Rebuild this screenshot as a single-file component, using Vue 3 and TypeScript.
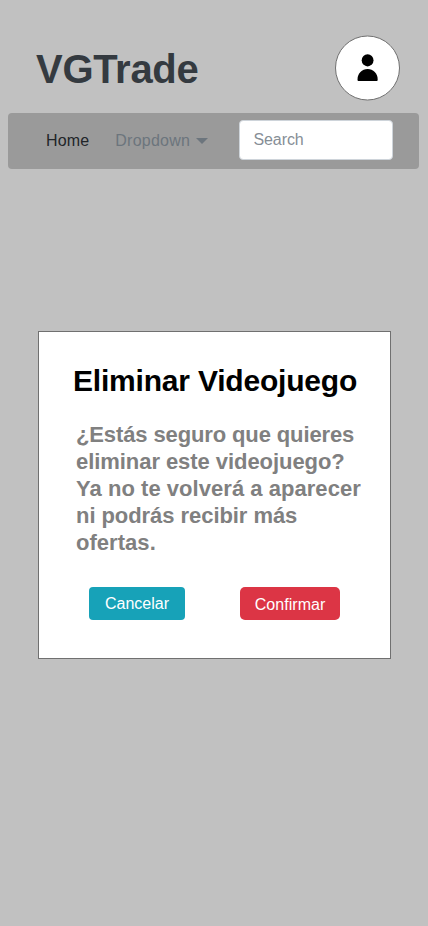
<script setup lang="ts">
import { ref } from 'vue'

const search = ref('')
</script>

<template>
  <div class="screen">
    <header class="top">
      <h1 class="brand">VGTrade</h1>
      <button class="avatar" aria-label="Perfil">
        <svg viewBox="0 0 65 65" width="65" height="65">
          <circle class="ring" cx="32.5" cy="32" r="32" />
          <ellipse cx="32.600" cy="24.300" rx="5.900" ry="6.100" />
          <path d="M22.500 43.500C22.500 37.300 27 33.100 32.600 33.100S42.700 37.300 42.700 43.500C42.700 44.500 42.300 45 41.300 45H23.900C22.900 45 22.500 44.500 22.500 43.500Z" />
        </svg>
      </button>
    </header>
    <nav class="nav">
      <a class="home">Home</a>
      <a class="drop">Dropdown<svg class="caret" viewBox="0 0 12 6" width="12" height="6"><path d="M0 0H12L6 6Z" /></svg></a>
      <input v-model="search" class="search" placeholder="Search" />
    </nav>
    <section class="dialog" role="dialog">
      <h2 class="title">Eliminar Videojuego</h2>
      <p class="text">
        <span class="tighter">¿Estás seguro que quieres</span>
        <span class="tight">eliminar este videojuego?</span>
        <span class="wide">Ya no te volverá a aparecer</span>
        <span class="tight">ni podrás recibir más</span>
        <span class="wide">ofertas.</span>
      </p>
      <div class="actions">
        <button class="btn cancel">Cancelar</button>
        <button class="btn confirm">Confirmar</button>
      </div>
    </section>
  </div>
</template>

<style>
body { background: #c1c1c1; }
</style>

<style scoped>
.screen {
  box-sizing: border-box;
  width: 428px;
  height: 926px;
  padding: 36px 9px 0 8px;
  overflow: hidden;
  background: #c1c1c1;
  font-family: "Liberation Sans", Arial, sans-serif;
  font-size: 16px;
}
.top { display: flex; justify-content: space-between; height: 77px; padding: 0 19px 0 28px; }
.brand { margin: 10px 0 0; font-size: 40px; line-height: 46px; letter-spacing: -0.3px; color: #343a40; }
.avatar { width: 65px; height: 65px; padding: 0; border: 0; background: none; }
.avatar svg { display: block; overflow: visible; }
.ring { fill: #fff; stroke: #707070; }
.nav { display: flex; align-items: center; box-sizing: border-box; height: 56px; padding: 0 26px 0 38px; border-radius: 4px; background: #9a9a9a; }
.home { letter-spacing: 0.15px; color: #212529; }
.drop { display: flex; align-items: center; margin-left: 26px; letter-spacing: 0.25px; color: #6c757d; }
.caret { margin: -1px 0 0 6px; fill: #6c757d; }
.search { box-sizing: border-box; width: 154px; height: 40px; margin: 0 0 2px auto; padding: 0 13px 0 13.5px; border: 1px solid #ced4da; border-radius: 4px; background: #fff; font: inherit; letter-spacing: -0.1px; }
.search::placeholder { color: #868e96; opacity: 1; }
.dialog { box-sizing: border-box; width: 353px; height: 328px; margin: 162px 0 0 30px; padding: 31px 28px 0 34px; border: 1px solid #707070; background: #fff; }
.title { margin: 0; font-size: 30px; line-height: 36px; letter-spacing: -0.2px; white-space: nowrap; color: #000; }
.text { margin: 22px 0 0 3px; font-size: 22px; font-weight: 700; line-height: 27px; white-space: nowrap; color: #808080; }
.text span { display: block; }
.tighter { letter-spacing: -0.12px; }
.tight { letter-spacing: -0.06px; }
.wide { letter-spacing: 0.04px; }
.actions { display: flex; justify-content: space-between; margin: 31px 22px 0 16px; }
.btn { height: 33px; padding: 0; border: 0; border-radius: 4px; color: #fff; font: inherit; }
.cancel { width: 96px; background: #17a2b8; }
.confirm { width: 100px; padding-top: 2px; border-radius: 5px; letter-spacing: 0.05px; background: #dc3545; }
</style>
